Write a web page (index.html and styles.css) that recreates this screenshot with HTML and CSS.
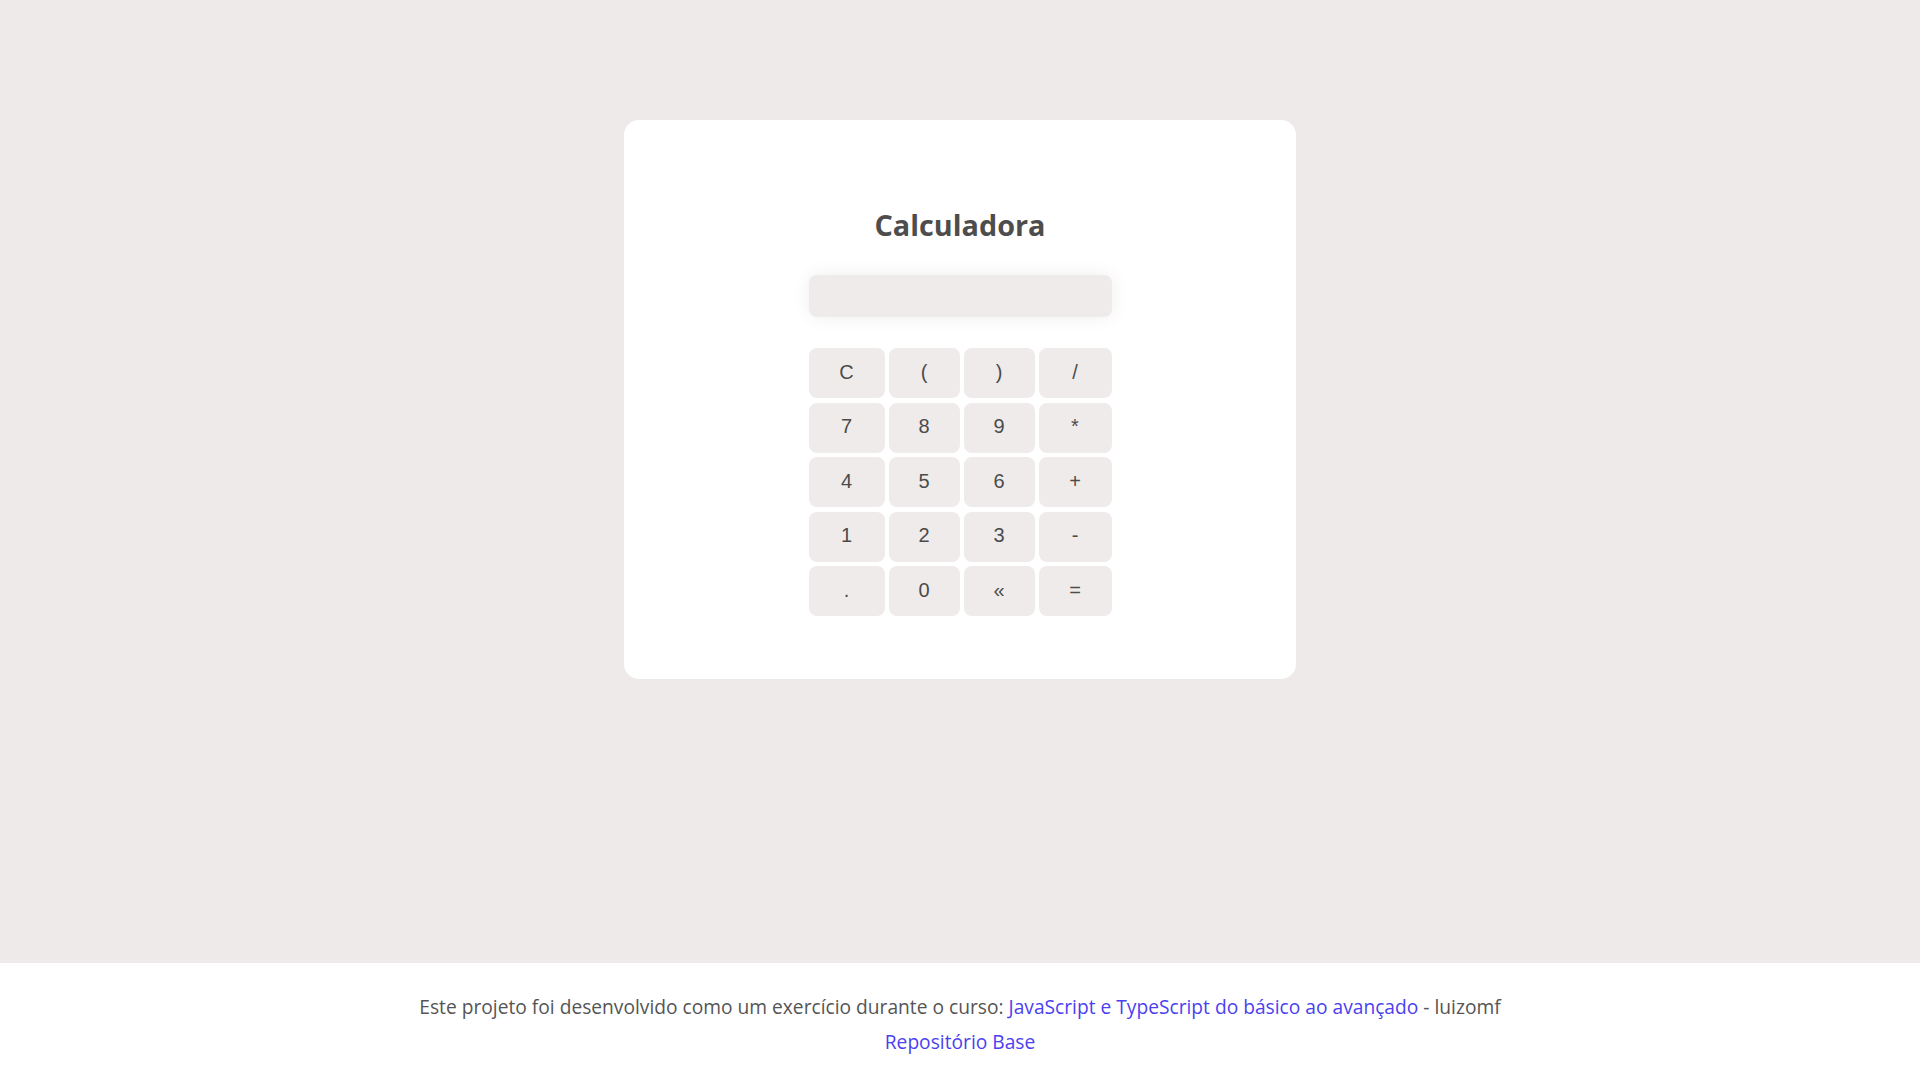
FILE: index.html
```html
<!DOCTYPE html>
<html lang="pt-BR">
<head>
<meta charset="utf-8">
<title>Calculadora</title>
<link rel="stylesheet" href="styles.css">
</head>
<body>
<main class="main">
  <section class="card">
    <h1 class="title">Calculadora</h1>
    <input class="display" type="text">
    <div class="keys">
      <button class="key">C</button>
      <button class="key">(</button>
      <button class="key">)</button>
      <button class="key">/</button>
      <button class="key">7</button>
      <button class="key">8</button>
      <button class="key">9</button>
      <button class="key">*</button>
      <button class="key">4</button>
      <button class="key">5</button>
      <button class="key">6</button>
      <button class="key">+</button>
      <button class="key">1</button>
      <button class="key">2</button>
      <button class="key">3</button>
      <button class="key">-</button>
      <button class="key">.</button>
      <button class="key">0</button>
      <button class="key">«</button>
      <button class="key">=</button>
    </div>
  </section>
</main>
<footer class="footer">
  <p class="line">Este projeto foi desenvolvido como um exercício durante o curso: <a class="link" href="#">JavaScript e TypeScript do básico ao avançado</a> - luizomf</p>
  <p class="line"><a class="link" href="#">Repositório Base</a></p>
</footer>
</body>
</html>
```
FILE: styles.css
```css
* { box-sizing: border-box; }
html, body { margin: 0; padding: 0; }
body {
  background: #eeeae9;
  font-family: "Open Sans", "Noto Sans", sans-serif;
  color: #4b4b4b;
}
.main {
  height: 963px;
  padding-top: 120px;
  display: flex;
  justify-content: center;
  align-items: flex-start;
}
.card {
  width: 672px;
  background: #ffffff;
  border-radius: 15px;
  padding: 86px 0 63px;
  display: flex;
  flex-direction: column;
  align-items: center;
}
.title {
  margin: 0;
  font-size: 28.8px;
  line-height: 38px;
  font-weight: 700;
  color: #4d4d4d;
}
.display {
  margin-top: 31px;
  width: 303px;
  height: 42px;
  border: 0;
  border-radius: 8px;
  background: #efebea;
  box-shadow: 0 0 18px rgba(0, 0, 0, 0.07);
  outline: none;
  padding: 0 10px;
  font-size: 20px;
}
.keys {
  margin-top: 31px;
  display: grid;
  grid-template-columns: 76px 71px 71px 73px;
  grid-auto-rows: 50px;
  column-gap: 4px;
  row-gap: 4.5px;
}
.key {
  border: 0;
  border-radius: 8px;
  background: #efebea;
  color: #4b4b4b;
  font-family: "Liberation Sans", Arial, sans-serif;
  font-size: 20px;
  padding: 0 0 2px;
}
.footer {
  height: 117px;
  background: #ffffff;
  padding-top: 26px;
  text-align: center;
}
.line {
  margin: 0;
  font-size: 19.2px;
  line-height: 35px;
  color: #555555;
}
.link {
  color: #4b3ff0;
  text-decoration: none;
}
```
